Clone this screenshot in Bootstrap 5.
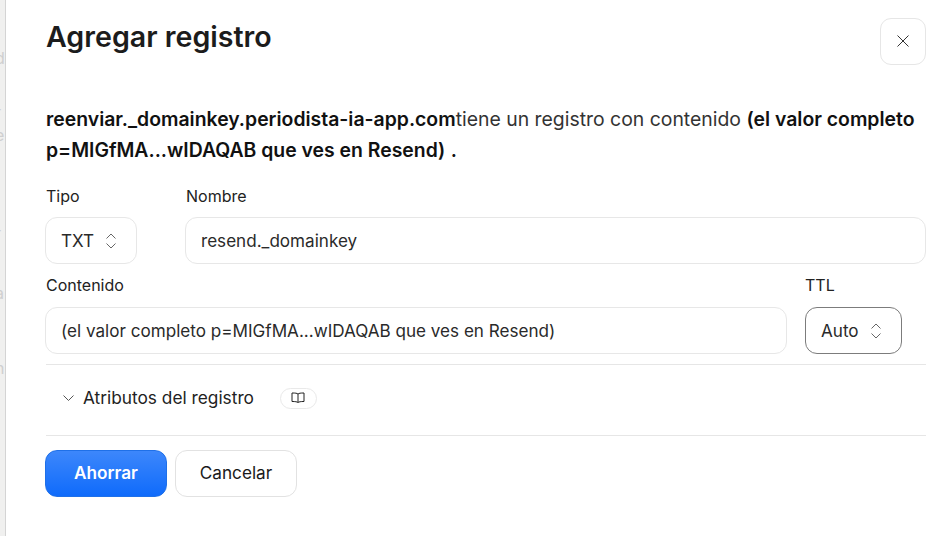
<!DOCTYPE html>
<html lang="es">
<head>
<meta charset="utf-8">
<title>Agregar registro</title>
<link href="https://cdn.jsdelivr.net/npm/bootstrap@5.3.0/dist/css/bootstrap.min.css" rel="stylesheet">
<style>
html,body{height:100%;overflow:hidden}
body{font-family:Inter,"Liberation Sans",sans-serif;background:#f1f1f1;color:#1a1a1a}
.stage{height:536px;width:946px}
.backdrop-strip{width:5px;flex:none;overflow:hidden;background:#f0f0ef;font-size:16px;color:#cfcfcf;line-height:20px}
.backdrop-strip span{display:block;margin-left:-5px}
.backdrop-strip .bl-1{margin-top:48px}
.backdrop-strip .bl-2{margin-top:34px}
.backdrop-strip .bl-3{margin-top:3px}
.backdrop-strip .bl-4{margin-top:78px}
.backdrop-strip .bl-5{margin-top:40px}
.backdrop-strip .bl-6{margin-top:55px}
.dlg{flex:1;background:#fff;border-left:1px solid #d4d4d4;padding:0 20px 0 40px}
.dlg-head{height:84px;padding-top:18px}
.dlg-title{font-size:28.6px;font-weight:600;line-height:38px;margin:0;color:#1c1c1c}
.close-box{width:46.500px;height:46.500px;padding:0;border:1px solid #e6e6e6;border-radius:11px;background:#fff}
.close-box svg,.sel-arrows,.chev,.book-ic{display:block}
.lead-text{font-size:19.4px;line-height:31px;margin:20px 0 0;color:#333}
.lead-text strong{font-weight:600;color:#111}
.fld-label{font-size:16px;line-height:22px;margin:0 0 10px;color:#222;display:block}
.form-control.fld,.sel-box{height:47px;border:1px solid #e7e7e7;border-radius:12px;font-size:17.1px;color:#2a2a2a;box-shadow:none}
.form-control.fld{padding:0 15px;background:#fff}
.col-nombre .fld-label{margin-left:1px}
.sel-box{display:flex;align-items:center;gap:12px;padding:0 15px;background:#fff;margin:0}
.sel-tipo{width:92px;margin-left:-1px}
.col-tipo{width:139px;flex:none}
.col-ttl{width:97px;flex:none}
.sel-ttl{border-color:#7c7c7c;width:97px;padding-right:0}
.row-one{margin-top:19px}
.row-two{margin-top:10px}
.row-two .fld-label{margin-bottom:11px}
.col-cont{width:742px;flex:none;margin-left:-1px;margin-right:18px}
.col-cont .fld-label{margin-left:1px}
.sep{margin:0;border:0;border-top:1px solid #e6e6e6;opacity:1}
.sep-a{margin-top:10px}
.attr-row{height:70px;padding:0 0 4px 16px;gap:8px;font-size:17.3px;color:#222}
.pill-book{width:37px;height:21px;margin-left:18px;border:1px solid #e9e9e9;border-radius:11px;background:#fff}
.act-row{margin-top:14px;margin-left:-1px;gap:8px}
.btn.btn-save,.btn.btn-cancel{width:122px;height:47px;border-radius:12px;font-size:17.2px;padding:0 0 2px}
.btn.btn-save{font-weight:600;color:#fff;background:linear-gradient(#3d87fb,#0f6bfb);border:1px solid #1f70e8}
.btn.btn-cancel{background:#fff;border:1px solid #e2e2e2;color:#1a1a1a}
</style>
</head>
<body>
<div class="stage d-flex">
  <div class="backdrop-strip" aria-hidden="true">
    <span class="bl-1">d</span><span class="bl-2">r</span><span class="bl-3">e</span><span class="bl-4">r</span><span class="bl-5">a</span><span class="bl-6">n</span>
  </div>
  <div class="dlg">
    <div class="dlg-head d-flex justify-content-between align-items-start">
      <h1 class="dlg-title">Agregar registro</h1>
      <button class="close-box d-flex align-items-center justify-content-center" type="button" aria-label="Cerrar">
        <svg width="12" height="12" viewBox="0 0 12 12" fill="none" stroke="#333" stroke-width="1"><path d="M.5.5l11 11M11.500.5l-11 11"/></svg>
      </button>
    </div>
    <p class="lead-text"><strong>reenviar._domainkey.periodista-ia-app.com</strong>tiene un registro con contenido <strong>(el valor completo p=MIGfMA...wIDAQAB que ves en Resend)</strong> <strong>.</strong></p>
    <div class="d-flex row-one">
      <div class="col-tipo">
        <label class="fld-label">Tipo</label>
        <div class="sel-box sel-tipo"><span>TXT</span>
          <svg class="sel-arrows" width="10" height="16" viewBox="0 0 10 16" fill="none" stroke="#666" stroke-width="1"><path d="M.5 5.500L5 1l4.500 4.500M.5 10.500L5 15l4.500-4.500"/></svg>
        </div>
      </div>
      <div class="col-nombre flex-grow-1">
        <label class="fld-label">Nombre</label>
        <input class="form-control fld" type="text" value="resend._domainkey">
      </div>
    </div>
    <div class="d-flex row-two">
      <div class="col-cont">
        <label class="fld-label">Contenido</label>
        <input class="form-control fld" type="text" value="(el valor completo p=MIGfMA...wIDAQAB que ves en Resend)">
      </div>
      <div class="col-ttl">
        <label class="fld-label">TTL</label>
        <div class="sel-box sel-ttl"><span>Auto</span>
          <svg class="sel-arrows" width="10" height="16" viewBox="0 0 10 16" fill="none" stroke="#666" stroke-width="1"><path d="M.5 5.500L5 1l4.500 4.500M.5 10.500L5 15l4.500-4.500"/></svg>
        </div>
      </div>
    </div>
    <hr class="sep sep-a">
    <div class="attr-row d-flex align-items-center">
      <svg class="chev" width="13" height="8" viewBox="0 0 13 8" fill="none" stroke="#555" stroke-width="1"><path d="M1.500 1.500l5 5 5-5"/></svg>
      <span>Atributos del registro</span>
      <span class="pill-book d-flex align-items-center justify-content-center">
        <svg class="book-ic" width="14" height="12" viewBox="0 0 14 12" fill="none" stroke="#222" stroke-width="1"><path d="M7 2C6 1.200 4.500 1 1 1v8.500c3.500 0 5 .3 6 1 1-.7 2.500-1 6-1V1c-3.500 0-5 .2-6 1zM7 2v8.500"/></svg>
      </span>
    </div>
    <hr class="sep">
    <div class="d-flex act-row">
      <button class="btn btn-save" type="button">Ahorrar</button>
      <button class="btn btn-cancel" type="button">Cancelar</button>
    </div>
  </div>
</div>
<script src="https://cdn.jsdelivr.net/npm/bootstrap@5.3.0/dist/js/bootstrap.bundle.min.js"></script>
</body>
</html>
